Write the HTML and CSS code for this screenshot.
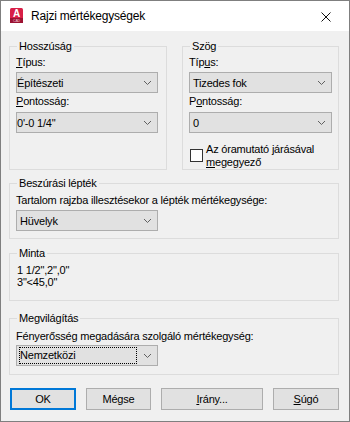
FILE: index.html
```html
<!DOCTYPE html>
<html lang="hu">
<head>
  <meta charset="UTF-8" />
  <title>Rajzi mértékegységek</title>
  <link rel="stylesheet" href="styles.css">
</head>
<body>
  <div class="window">
    <div class="titlebar">
      <svg class="app-icon" width="13" height="15" viewBox="0 0 13 15">
        <rect x="0" y="0" width="13" height="15" rx="1.5" fill="#d81f47" />
        <rect x="0" y="10" width="13" height="5" fill="#9b1232" />
        <text x="6.5" y="9" text-anchor="middle" font-family="Liberation Sans" font-weight="bold" font-size="10" fill="#fff">A</text>
        <text x="6.5" y="14" text-anchor="middle" font-family="Liberation Sans" font-size="3.5" fill="#f4c6d0">CAD</text>
      </svg>
      <span class="title">Rajzi mértékegységek</span>
      <svg class="close" width="10" height="10" viewBox="0 0 10 10">
        <path d="M0.5 0.5 L9.5 9.5 M9.5 0.5 L0.5 9.5" stroke="#111" stroke-width="1" fill="none" />
      </svg>
    </div>

    <div class="client">
      <div class="top-row">
        <fieldset class="group group-length">
          <legend>Hosszúság</legend>
          <div class="field-label first"><u>T</u>ípus:</div>
          <div class="combo combo-tight w142"><span>Építészeti</span><svg class="chevron" width="7" height="4" viewBox="0 0 7 4"><path d="M0 0 L3.5 3.5 L7 0" stroke="#606060" fill="none" /></svg></div>
          <div class="field-label second"><u>P</u>ontosság:</div>
          <div class="combo combo-tight w142 combo-second"><span>0'-0 1/4"</span><svg class="chevron" width="7" height="4" viewBox="0 0 7 4"><path d="M0 0 L3.5 3.5 L7 0" stroke="#606060" fill="none" /></svg></div>
        </fieldset>

        <fieldset class="group group-angle">
          <legend>Szög</legend>
          <div class="field-label first">Típ<u>u</u>s:</div>
          <div class="combo w143"><span>Tizedes fok</span><svg class="chevron" width="7" height="4" viewBox="0 0 7 4"><path d="M0 0 L3.5 3.5 L7 0" stroke="#606060" fill="none" /></svg></div>
          <div class="field-label second">P<u>o</u>ntosság:</div>
          <div class="combo w143 combo-second"><span>0</span><svg class="chevron" width="7" height="4" viewBox="0 0 7 4"><path d="M0 0 L3.5 3.5 L7 0" stroke="#606060" fill="none" /></svg></div>
          <div class="check">
            <span class="check-box"></span>
            <span class="check-text">Az óramutató járásával<br><u>m</u>egegyező</span>
          </div>
        </fieldset>
      </div>

      <fieldset class="group group-insert">
        <legend>Beszúrási lépték</legend>
        <div class="field-label">Tartalom rajzba illesztésekor a lépték mértékegysége:</div>
        <div class="combo w142"><span>Hüvelyk</span><svg class="chevron" width="7" height="4" viewBox="0 0 7 4"><path d="M0 0 L3.5 3.5 L7 0" stroke="#606060" fill="none" /></svg></div>
      </fieldset>

      <fieldset class="group group-sample">
        <legend>Minta</legend>
        <div class="sample-text">1 1/2",2",0"<br>3"&lt;45,0"</div>
      </fieldset>

      <fieldset class="group group-light">
        <legend>Megvilágítás</legend>
        <div class="field-label">Fényerősség megadására szolgáló mértékegység:</div>
        <div class="combo w142 combo-focus"><span class="focus-rect">Nemzetközi</span><svg class="chevron" width="7" height="4" viewBox="0 0 7 4"><path d="M0 0 L3.5 3.5 L7 0" stroke="#606060" fill="none" /></svg></div>
      </fieldset>

      <div class="buttons">
        <button class="btn btn-default w66">OK</button>
        <button class="btn w65">Mégse</button>
        <button class="btn w102"><u>I</u>rány...</button>
        <button class="btn w66"><u>S</u>úgó</button>
      </div>
    </div>
  </div>
</body>
</html>
```

FILE: styles.css
```css
html, body {
  margin: 0;
  padding: 0;
  background: #f0f0f0;
}

.window {
  width: 350px;
  height: 422px;
  box-sizing: border-box;
  border: 1px solid #7f7f7f;
  background: #f0f0f0;
  font-family: "Liberation Sans", Arial, sans-serif;
  font-size: 11px;
  letter-spacing: -0.2px;
  color: #000;
  display: flex;
  flex-direction: column;
}

/* title bar */
.titlebar {
  height: 30px;
  background: #fff;
  display: flex;
  align-items: center;
  padding-left: 9px;
  padding-right: 18px;
}

.app-icon {
  margin-right: 8px;
  margin-top: -1px;
}

.title {
  flex: 1;
  font-size: 12px;
  letter-spacing: -0.2px;
  color: #000;
}

.close {
  margin-top: 1px;
}

/* dialog body */
.client {
  flex: 1;
  padding: 8px 10px 0 8px;
}

.top-row {
  display: flex;
  gap: 15px;
}

.group {
  margin: 0;
  min-width: 0;
  box-sizing: border-box;
  border: 1px solid #dcdcdc;
  padding: 0 6px 0 6px;
}

.group legend {
  padding: 0 2px;
  margin-left: 1px;
  line-height: 14px;
  font-size: 11px;
}

.group-length {
  width: 158px;
}

.group-angle {
  width: 157px;
}

.field-label {
  line-height: 13px;
  margin-top: 4px;
  white-space: nowrap;
}

.field-label.first {
  margin-top: 3px;
}

.field-label.second {
  margin-top: 2px;
}

.combo {
  height: 21px;
  box-sizing: border-box;
  margin-top: 3px;
  border: 1px solid #adadad;
  background: #e1e1e1;
  display: flex;
  align-items: center;
  padding: 0 6px 0 3px;
}

.combo span {
  flex: 1;
  white-space: nowrap;
}

.combo-tight {
  padding-left: 0;
}

.combo-second {
  margin-top: 4px;
}

.w142 { width: 142px; }
.w143 { width: 143px; }

.chevron {
  display: block;
}

.focus-rect {
  outline: 1px dotted #000;
  outline-offset: 0;
  line-height: 15px;
  margin-right: 8px;
}

.check {
  display: flex;
  align-items: center;
  margin-top: 10px;
  margin-left: 1px;
}

.check-box {
  width: 13px;
  height: 13px;
  box-sizing: border-box;
  border: 1px solid #333;
  background: #fff;
  margin-right: 3px;
  margin-top: -1px;
}

.check-text {
  line-height: 13px;
}

/* full width groups */
.group-insert {
  margin-top: 6px;
  padding-bottom: 7px;
}

.group-sample {
  margin-top: 7px;
  padding-bottom: 12px;
}

.sample-text {
  margin-top: 4px;
  line-height: 12px;
  padding-left: 1px;
}

.group-light {
  margin-top: 10px;
  padding-bottom: 8px;
}

.group-light .field-label {
  margin-top: 5px;
}

.group-light .combo {
  margin-top: 2px;
}

/* buttons */
.buttons {
  display: flex;
  gap: 10px;
  margin-top: 13px;
  padding-left: 1px;
}

.btn {
  height: 22px;
  box-sizing: border-box;
  border: 1px solid #adadad;
  background: #e1e1e1;
  font-family: "Liberation Sans", Arial, sans-serif;
  font-size: 11px;
  letter-spacing: -0.2px;
  color: #000;
  padding: 0;
}

.btn-default {
  border: 2px solid #0078d7;
}

.w66 { width: 66px; }
.w65 { width: 65px; }
.w102 { width: 102px; }
```
